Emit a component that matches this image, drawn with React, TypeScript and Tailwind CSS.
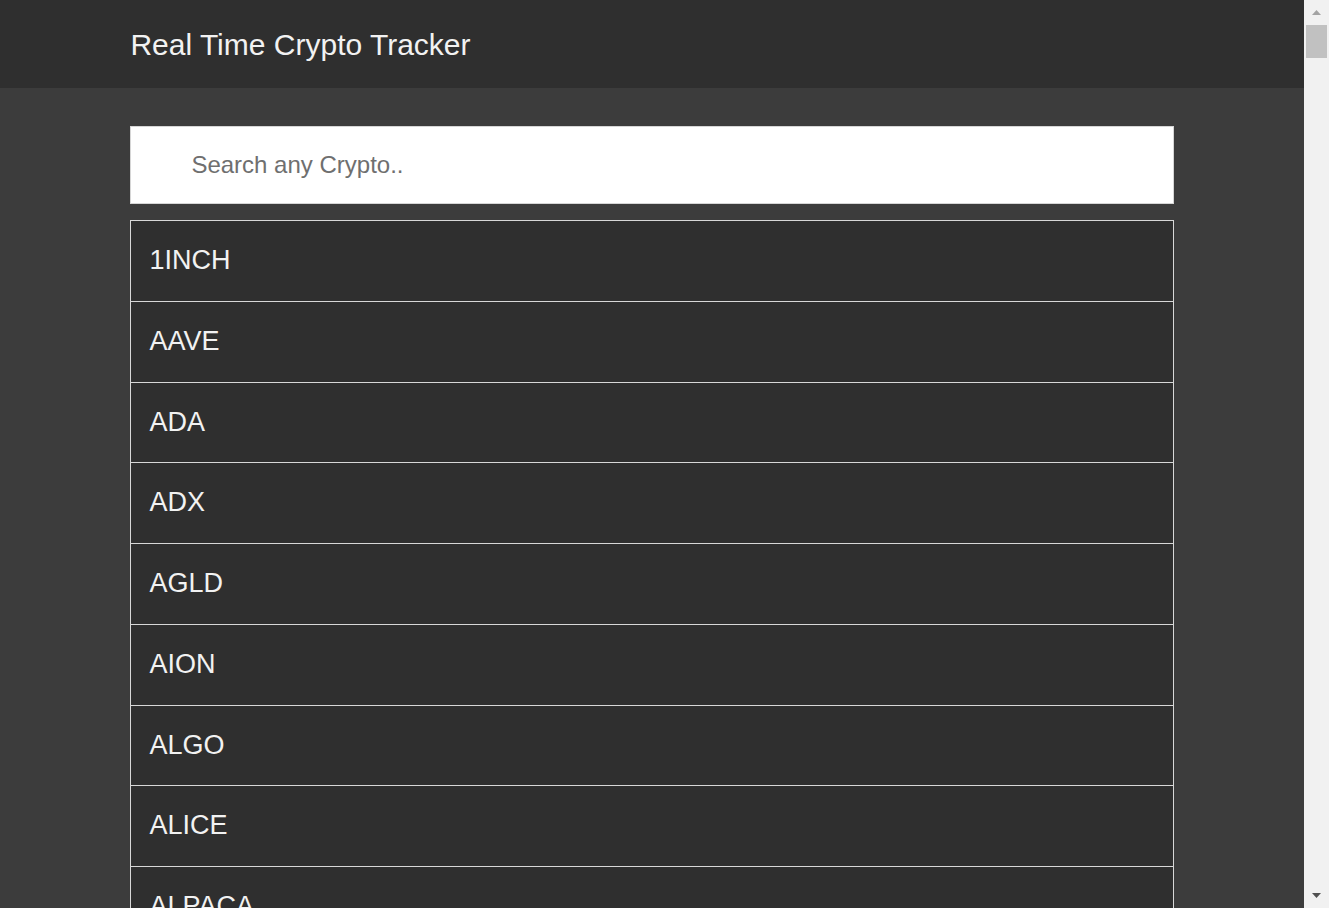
import React from "react";

const coins = ["1INCH", "AAVE", "ADA", "ADX", "AGLD", "AION", "ALGO", "ALICE", "ALPACA", "ALPHA"];

export default function App() {
  return (
    <div className="flex h-[908px] w-full overflow-hidden bg-[#3c3c3c]" style={{ fontFamily: '"Liberation Sans", Arial, sans-serif' }}>
      <div className="flex min-w-0 flex-1 flex-col">
        <header className="h-[88px] shrink-0 bg-[#2f2f2f]">
          <div className="mx-auto flex h-full w-[80%] items-center pt-[2px]">
            <h1 className="text-[30px] leading-none text-[#f2f2f2]">Real Time Crypto Tracker</h1>
          </div>
        </header>
        <main className="mx-auto w-[80%] pt-[38px]">
          <div className="flex h-[78px] items-center border border-[#d6d6d6] bg-white pl-[60px]">
            <input
              className="w-full bg-transparent text-[24px] text-[#333] outline-none placeholder:text-[#6f6f6f]"
              placeholder="Search any Crypto.."
              style={{ fontFamily: '"Liberation Sans", Arial, sans-serif' }}
            />
          </div>
          <div className="mt-[16px] border-t border-[#d8d8d8]">
            {coins.map((c) => (
              <div
                key={c}
                className="flex h-[80.75px] items-center border-x border-b border-[#d8d8d8] bg-[#2f2f2f] pb-[1px] pl-[18px] text-[27px] text-[#f2f2f2]"
              >
                {c}
              </div>
            ))}
          </div>
        </main>
      </div>
      <div className="relative flex h-full w-[25px] shrink-0 flex-col items-center bg-[#f1f1f1]">
        <div className="flex h-[25px] w-full items-center justify-center">
          <svg width="9" height="6" viewBox="0 0 9 6"><path d="M4.5 0L9 5H0z" fill="#a3a3a3" /></svg>
        </div>
        <div className="h-[33px] w-[21px] bg-[#c1c1c1]" />
        <div className="flex-1" />
        <div className="flex h-[25px] w-full items-center justify-center">
          <svg width="9" height="6" viewBox="0 0 9 6"><path d="M0 0H9L4.5 5z" fill="#505050" /></svg>
        </div>
      </div>
    </div>
  );
}
